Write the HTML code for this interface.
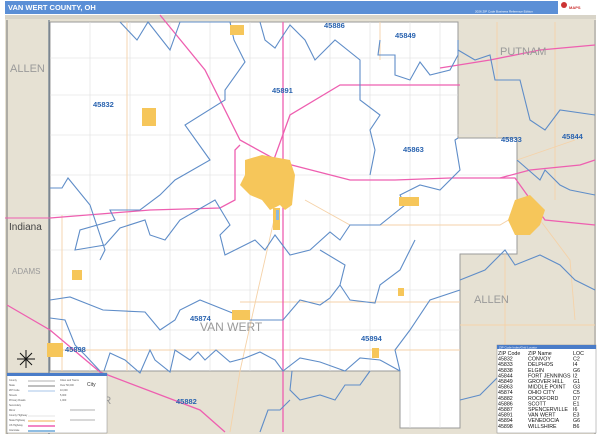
<!DOCTYPE html>
<html><head><style>
html,body{margin:0;padding:0;background:#fff;width:600px;height:436px;overflow:hidden;font-family:"Liberation Sans",sans-serif}
</style></head><body>
<svg width="600" height="436" viewBox="0 0 600 436" xmlns="http://www.w3.org/2000/svg" font-family="Liberation Sans, sans-serif">
<rect x="0" y="0" width="600" height="436" fill="#fff"/>
<rect x="5" y="1" width="553" height="13" fill="#5b8fd6"/>
<text x="8" y="10" font-size="7.5" font-weight="bold" fill="#fff">VAN WERT COUNTY, OH</text>
<text x="475" y="12.5" font-size="3" fill="#fff">2026 ZIP Code Business Reference Edition</text>
<rect x="559" y="1" width="36" height="13" fill="#fff"/>
<circle cx="564" cy="5" r="3" fill="#c33"/>
<text x="569" y="9" font-size="4" font-weight="bold" fill="#c33">MAPS</text>
<rect x="5" y="15" width="591" height="419" fill="#e6e1d3"/>
<rect x="5" y="15" width="591" height="4" fill="#d8d4c8"/>
<line x1="7" y1="20" x2="7" y2="434" stroke="#777" stroke-width="1"/>
<line x1="595" y1="20" x2="595" y2="434" stroke="#999" stroke-width="1"/>
<polygon points="50,22 458,22 458,138 517,138 517,254 460,254 460,428 400,428 400,371 50,371" fill="#fff"/>
<polyline points="50,22 458,22 458,138 517,138 517,254 460,254 460,428 400,428 400,371 50,371 50,22" fill="none" stroke="#9a9a9a" stroke-width="1"/>
<line x1="49" y1="20" x2="49" y2="434" stroke="#6a7a8a" stroke-width="1.2"/>
<g stroke="#dedede" stroke-width="0.6">
<line x1="50" y1="58" x2="458" y2="58"/><line x1="50" y1="95" x2="458" y2="95"/>
<line x1="50" y1="135" x2="517" y2="135"/><line x1="50" y1="175" x2="517" y2="175"/>
<line x1="50" y1="215" x2="517" y2="215"/><line x1="50" y1="250" x2="517" y2="250"/>
<line x1="50" y1="290" x2="460" y2="290"/><line x1="50" y1="330" x2="460" y2="330"/>
<line x1="90" y1="22" x2="90" y2="371"/><line x1="130" y1="22" x2="130" y2="371"/>
<line x1="170" y1="22" x2="170" y2="371"/><line x1="210" y1="22" x2="210" y2="371"/>
<line x1="250" y1="22" x2="250" y2="371"/><line x1="290" y1="22" x2="290" y2="371"/>
<line x1="330" y1="22" x2="330" y2="371"/><line x1="370" y1="22" x2="370" y2="371"/>
<line x1="410" y1="22" x2="410" y2="428"/><line x1="440" y1="22" x2="440" y2="428"/>
</g>
<g stroke="#f5d2a8" stroke-width="0.9" fill="none">
<line x1="127" y1="22" x2="127" y2="371"/><line x1="62" y1="215" x2="62" y2="371"/>
<path d="M274,220 L258,290 L240,371 L230,432"/>
<path d="M305,200 L350,225 L500,225 L517,215"/>
<line x1="240" y1="302" x2="460" y2="302"/>
<line x1="50" y1="350" x2="460" y2="350"/>
<line x1="380" y1="22" x2="380" y2="60"/>
<line x1="497" y1="22" x2="497" y2="138"/>
<line x1="555" y1="22" x2="555" y2="200"/>
<path d="M517,160 L575,140"/><path d="M540,220 L570,260 L575,320"/>
<line x1="505" y1="254" x2="505" y2="432"/>
<line x1="460" y1="325" x2="595" y2="325"/>
</g>
<g stroke="#ee5fb0" stroke-width="1.3" fill="none">
<path d="M160,15 L205,70 L240,140 L280,162 L350,180 L395,180 L450,178 L515,178 L545,220 L595,225"/>
<path d="M50,218 L150,210 L220,208 L235,200 L235,150 L240,145"/>
<path d="M283,22 L283,432"/>
<path d="M273,162 L290,115 L340,85 L460,85"/>
<path d="M500,178 L530,170 L580,165 L595,160"/>
<path d="M7,305 L50,330 L100,372 L200,410 L225,432"/>
<path d="M440,68 L490,60 L540,50 L595,45"/>
</g>
<g stroke="#5f8dc8" stroke-width="1.1" fill="none">
<path d="M120,22 L137,40 L148,22 L170,50 L180,22 L230,22 L234,40 L245,62 L225,90 L225,100 L185,125 L210,160 L175,180 L160,195 L140,210 L110,210 L115,220 L80,230 L75,250 L105,245 L120,228 L145,220 L150,235 L165,240 L180,220 L215,200 L230,225 L220,235 L225,255 L255,240 L265,250 L275,235 L290,255 L310,250 L330,232 L340,240 L350,225 L380,225 L405,205 L400,195 L420,185 L440,190 L460,170 L455,140 L458,138"/>
<path d="M50,188 L62,188 L68,178 L90,205 L100,235 L105,250 L100,260"/>
<path d="M50,300 L70,297 L103,310 L145,312 L160,330 L175,320 L180,310 L200,300 L250,320 L283,320 L300,300 L320,305 L330,298 L340,285 L345,265 L320,250"/>
<path d="M340,285 L350,300 L375,303 L380,285 L400,270 L415,240"/>
<path d="M400,371 L395,350 L410,330 L430,300 L460,290"/>
<path d="M104,371 L110,353 L125,360 L140,373 L150,350 L155,360 L170,372 L175,350 L190,360 L198,352 L205,360 L216,350 L230,362 L245,358 L260,352 L275,360 L283,371 L300,358 L320,362 L345,371 L360,358 L380,360 L400,371"/>
<path d="M50,318 L65,320 L75,345 L85,355 L100,371"/>
<path d="M260,22 L265,40 L275,48 L280,40 L290,25 L305,40 L315,60 L335,40 L360,60 L360,100 L380,115 L370,130 L375,150 L370,175"/>
<path d="M380,40 L378,55 L395,55 L395,75 L410,80 L420,62 L430,75 L450,70 L458,55 L458,40"/>
<path d="M458,50 L475,60 L490,55 L495,80 L520,80 L530,120 L545,130 L560,110 L595,115"/>
<path d="M517,160 L540,180 L545,170 L560,185 L570,190 L595,195"/>
<path d="M460,280 L485,270 L505,250 L515,265 L540,255 L560,265 L575,280 L595,290"/>
<path d="M460,400 L480,395 L500,375 L520,390 L535,380 L545,400 L560,380 L570,395 L575,432"/>
<path d="M292,371 L290,390 L300,400 L320,395 L335,400 L345,385 L360,385 L370,371"/>
<path d="M260,432 L268,410 L280,410 L290,400"/>
</g>
<g fill="#f6c65a">
<path d="M245,160 L262,155 L290,160 L295,175 L292,205 L285,210 L280,205 L270,210 L262,200 L250,195 L240,185 L245,175Z"/>
<rect x="273" y="208" width="7" height="22"/>
<path d="M515,200 L530,195 L545,210 L540,225 L530,235 L515,235 L508,220Z"/>
<rect x="142" y="108" width="14" height="18"/>
<rect x="399" y="197" width="20" height="9"/>
<rect x="232" y="310" width="18" height="10"/>
<rect x="372" y="348" width="7" height="10"/>
<rect x="72" y="270" width="10" height="10"/>
<rect x="398" y="288" width="6" height="8"/>
<rect x="47" y="343" width="16" height="14"/>
<rect x="230" y="25" width="14" height="10"/>
</g>
<rect x="276" y="210" width="3" height="10" fill="#8ab8e0"/>
<g font-size="7.5" fill="#2b64b0" font-weight="bold">
<text x="93" y="107">45832</text><text x="272" y="93">45891</text>
<text x="324" y="28">45886</text><text x="395" y="38">45849</text>
<text x="403" y="152">45863</text><text x="501" y="142">45833</text>
<text x="562" y="139">45844</text><text x="190" y="321">45874</text>
<text x="361" y="341">45894</text><text x="65" y="352">45898</text>
<text x="176" y="404">45882</text>
</g>
<g fill="#9a9a9a" font-size="11">
<text x="10" y="72">ALLEN</text>
<text x="500" y="55">PUTNAM</text>
<text x="200" y="331" font-size="12">VAN WERT</text>
<text x="474" y="303">ALLEN</text>
<text x="12" y="274" font-size="8">ADAMS</text>
<text x="96" y="404">ER</text>
</g>
<line x1="5" y1="218" x2="50" y2="218" stroke="#ee5fb0" stroke-width="1"/>
<text x="9" y="230" font-size="10" fill="#444">Indiana</text>
<g stroke="#111" stroke-width="1">
<line x1="26" y1="350" x2="26" y2="368"/><line x1="17" y1="359" x2="35" y2="359"/>
<line x1="20" y1="353" x2="32" y2="365"/><line x1="32" y1="353" x2="20" y2="365"/>
</g>
<rect x="7" y="373" width="100" height="60" fill="#fff" stroke="#888" stroke-width="0.5"/>
<rect x="7" y="373" width="100" height="3" fill="#4a7cc8"/>
<g font-size="2.5" fill="#555">
<text x="9" y="381">County</text><text x="9" y="386">State</text><text x="9" y="391">ZIP Code</text>
<text x="9" y="396">Streets</text><text x="9" y="401">Primary Roads</text><text x="9" y="406">Secondary</text>
<text x="9" y="411">Minor</text><text x="9" y="416">County Highway</text><text x="9" y="421">State Highway</text>
<text x="9" y="426">US Highway</text><text x="9" y="431">Interstate</text>
<text x="60" y="381">Cities and Towns</text><text x="60" y="386">Over 50,000</text><text x="60" y="391">10,000</text>
<text x="60" y="396">5,000</text><text x="60" y="401">1,000</text>
</g>
<g stroke-width="0.8">
<line x1="28" y1="381" x2="55" y2="381" stroke="#999"/><line x1="28" y1="386" x2="55" y2="386" stroke="#555"/>
<line x1="28" y1="391" x2="55" y2="391" stroke="#8ab0e0"/><line x1="28" y1="416" x2="55" y2="416" stroke="#ddd"/>
<line x1="28" y1="421" x2="55" y2="421" stroke="#f5c98a" stroke-width="1.5"/><line x1="28" y1="426" x2="55" y2="426" stroke="#ee5fb0" stroke-width="1.5"/>
<line x1="28" y1="431" x2="55" y2="431" stroke="#6aa7d9" stroke-width="1.5"/>
<line x1="70" y1="410" x2="95" y2="410" stroke="#999"/><line x1="70" y1="420" x2="95" y2="420" stroke="#999"/>
</g>
<text x="87" y="386" font-size="5" fill="#333">City</text>
<rect x="497" y="345" width="99" height="88" fill="#fff" stroke="#888" stroke-width="0.5"/>
<rect x="497" y="345" width="99" height="4" fill="#4a7cc8"/>
<text x="499" y="348.5" font-size="3" fill="#fff">ZIP Code Index/Grid Locator</text>
<g font-size="5.3" fill="#111">
<text x="498" y="355">ZIP Code</text><text x="528" y="355">ZIP Name</text><text x="573" y="355">LOC</text>
<text x="498" y="360.6">45832</text><text x="528" y="360.6">CONVOY</text><text x="573" y="360.6">C2</text>
<text x="498" y="366.2">45833</text><text x="528" y="366.2">DELPHOS</text><text x="573" y="366.2">I4</text>
<text x="498" y="371.8">45838</text><text x="528" y="371.8">ELGIN</text><text x="573" y="371.8">G6</text>
<text x="498" y="377.4">45844</text><text x="528" y="377.4">FORT JENNINGS</text><text x="573" y="377.4">I2</text>
<text x="498" y="383">45849</text><text x="528" y="383">GROVER HILL</text><text x="573" y="383">G1</text>
<text x="498" y="388.6">45863</text><text x="528" y="388.6">MIDDLE POINT</text><text x="573" y="388.6">G3</text>
<text x="498" y="394.2">45874</text><text x="528" y="394.2">OHIO CITY</text><text x="573" y="394.2">C5</text>
<text x="498" y="399.8">45882</text><text x="528" y="399.8">ROCKFORD</text><text x="573" y="399.8">D7</text>
<text x="498" y="405.4">45886</text><text x="528" y="405.4">SCOTT</text><text x="573" y="405.4">E1</text>
<text x="498" y="411">45887</text><text x="528" y="411">SPENCERVILLE</text><text x="573" y="411">I6</text>
<text x="498" y="416.6">45891</text><text x="528" y="416.6">VAN WERT</text><text x="573" y="416.6">E3</text>
<text x="498" y="422.2">45894</text><text x="528" y="422.2">VENEDOCIA</text><text x="573" y="422.2">G6</text>
<text x="498" y="427.8">45898</text><text x="528" y="427.8">WILLSHIRE</text><text x="573" y="427.8">B6</text>
</g>
</svg>
</body></html>
